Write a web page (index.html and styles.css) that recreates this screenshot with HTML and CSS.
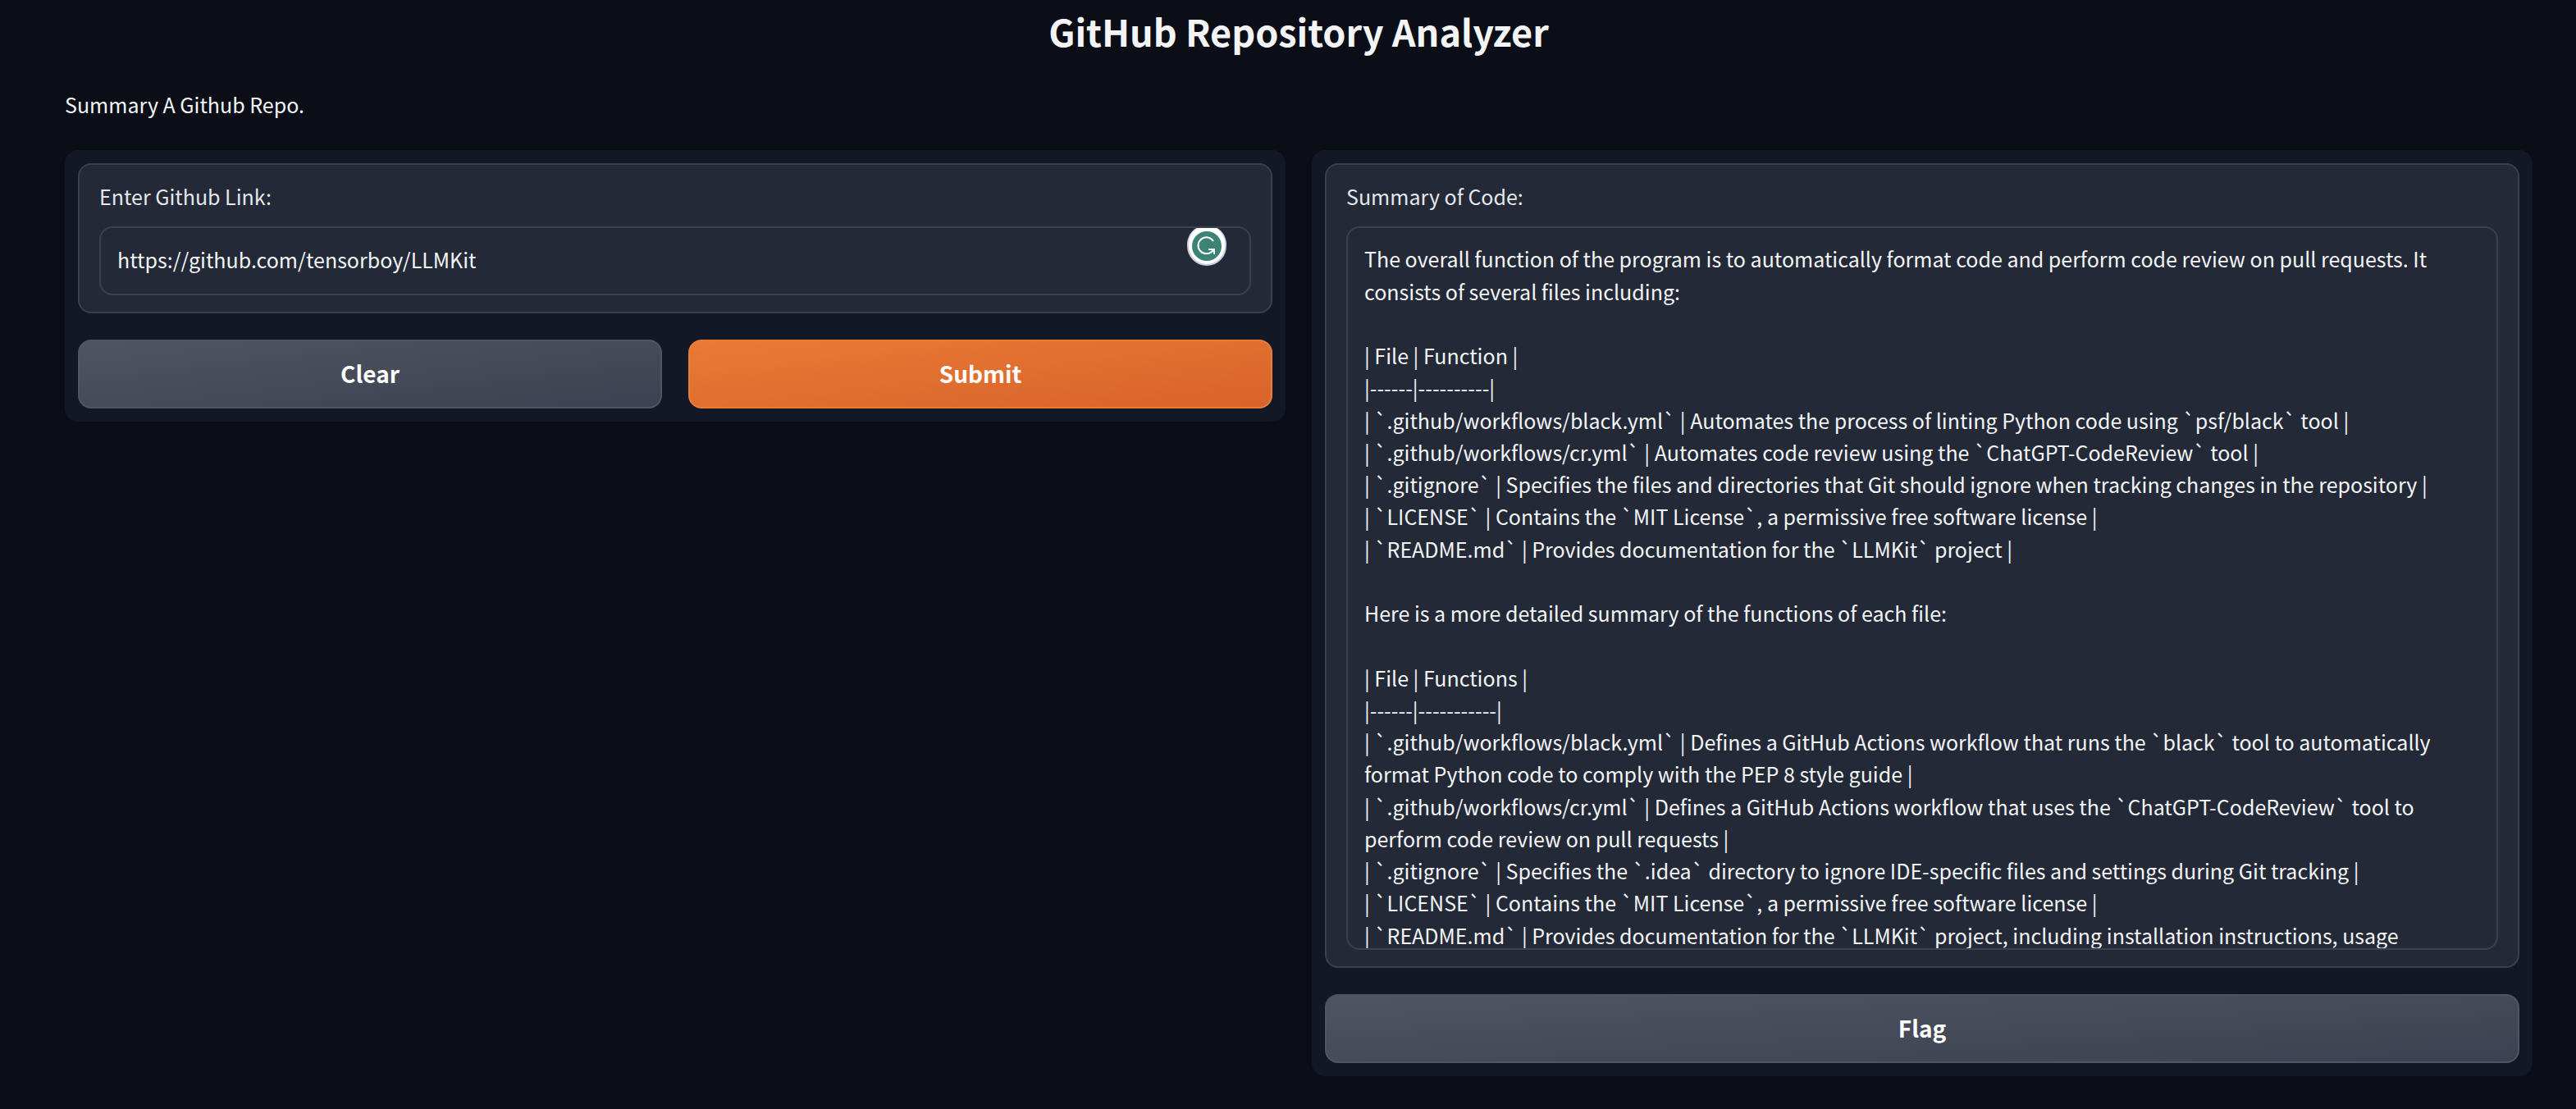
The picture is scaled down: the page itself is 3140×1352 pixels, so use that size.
FILE: index.html
```html
<!DOCTYPE html>
<html lang="en">
<head>
<meta charset="utf-8">
<meta name="viewport" content="width=device-width, initial-scale=1">
<title>GitHub Repository Analyzer</title>
<link rel="stylesheet" href="styles.css">
</head>
<body>
<main class="app">
  <h1 class="title">GitHub Repository Analyzer</h1>
  <p class="description">Summary A Github Repo.</p>
  <div class="columns">
    <form class="panel">
      <div class="block">
        <label class="label" for="link">Enter Github Link:</label>
        <div class="field">
          <input class="control" id="link" type="text" value="https://github.com/tensorboy/LLMKit" spellcheck="false">
          <svg class="badge" viewBox="0 0 48 46" aria-hidden="true">
            <path d="M11 0H37A24 24 0 0 1 48 22A24 24 0 0 1 0 22A24 24 0 0 1 11 0Z" fill="#c9ccd8"/>
            <path d="M13 0H35A22 22 0 0 1 46 22A22 22 0 0 1 2 22A22 22 0 0 1 13 0Z" fill="#fff"/>
            <circle cx="24" cy="22" r="18" fill="#3a8375"/>
            <path d="M32 16A10 10 0 1 0 30 29L33 26M26 26H33V32" fill="none" stroke="#fff" stroke-width="2"/>
          </svg>
        </div>
      </div>
      <div class="actions">
        <button class="button" type="reset">Clear</button>
        <button class="button primary" type="button">Submit</button>
      </div>
    </form>
    <section class="panel">
      <div class="block">
        <label class="label" for="summary">Summary of Code:</label>
        <textarea class="control output" id="summary" rows="22" readonly spellcheck="false">The overall function of the program is to automatically format code and perform code review on pull requests. It consists of several files including:

| File | Function |
|------|----------|
| `.github/workflows/black.yml` | Automates the process of linting Python code using `psf/black` tool |
| `.github/workflows/cr.yml` | Automates code review using the `ChatGPT-CodeReview` tool |
| `.gitignore` | Specifies the files and directories that Git should ignore when tracking changes in the repository |
| `LICENSE` | Contains the `MIT License`, a permissive free software license |
| `README.md` | Provides documentation for the `LLMKit` project |

Here is a more detailed summary of the functions of each file:

| File | Functions |
|------|-----------|
| `.github/workflows/black.yml` | Defines a GitHub Actions workflow that runs the `black` tool to automatically format Python code to comply with the PEP 8 style guide |
| `.github/workflows/cr.yml` | Defines a GitHub Actions workflow that uses the `ChatGPT-CodeReview` tool to perform code review on pull requests |
| `.gitignore` | Specifies the `.idea` directory to ignore IDE-specific files and settings during Git tracking |
| `LICENSE` | Contains the `MIT License`, a permissive free software license |
| `README.md` | Provides documentation for the `LLMKit` project, including installation instructions, usage</textarea>
      </div>
      <button class="button" type="button">Flag</button>
    </section>
  </div>
</main>
</body>
</html>
```
FILE: styles.css
```css
* {
  box-sizing: border-box;
}

body {
  margin: 0;
  min-height: 100vh;
  background: #0c0e17;
  color: #f3f4f6;
  font-family: "Noto Sans CJK SC", "Noto Sans", sans-serif;
  font-size: 25px;
  line-height: 1.57;
}

.app {
  padding: 6px 53px 40px 79px;
}

.title {
  margin: 0 0 33px;
  font-size: 45px;
  font-weight: 600;
  line-height: 64px;
  text-align: center;
}

.description {
  margin: 0 0 32px;
  line-height: 48px;
}

.columns {
  display: grid;
  grid-template-columns: 1fr 1fr;
  align-items: start;
  gap: 32px;
}

.panel {
  display: flex;
  flex-direction: column;
  gap: 32px;
  padding: 16px;
  border-radius: 16px;
  background: #121826;
}

.block {
  padding: 19px 24px 20px;
  border: 2px solid #3a404e;
  border-radius: 16px;
  background: #232936;
}

.label {
  display: block;
  margin-bottom: 17px;
  color: #e5e7eb;
}

.field {
  position: relative;
}

.control {
  display: block;
  width: 100%;
  height: 84px;
  padding: 18px 20px 22px;
  border: 2px solid #3a404e;
  border-radius: 16px;
  outline: none;
  background: transparent;
  color: #f3f4f6;
  font: inherit;
}

.output {
  height: 882px;
  overflow: hidden;
  resize: none;
}

.badge {
  position: absolute;
  top: 2px;
  right: 30px;
  width: 48px;
  height: 46px;
}

.actions {
  display: grid;
  grid-template-columns: 1fr 1fr;
  gap: 32px;
}

.button {
  height: 84px;
  padding: 0 20px;
  border: 2px solid #4f5561;
  border-radius: 16px;
  background: linear-gradient(to bottom right, #4f5561, #3b4150) border-box;
  color: #fff;
  font: inherit;
  font-size: 28px;
  font-weight: 600;
}

.primary {
  border-color: #e87e36;
  background: linear-gradient(to bottom right, #e97b35, #d8622b) border-box;
}
```
